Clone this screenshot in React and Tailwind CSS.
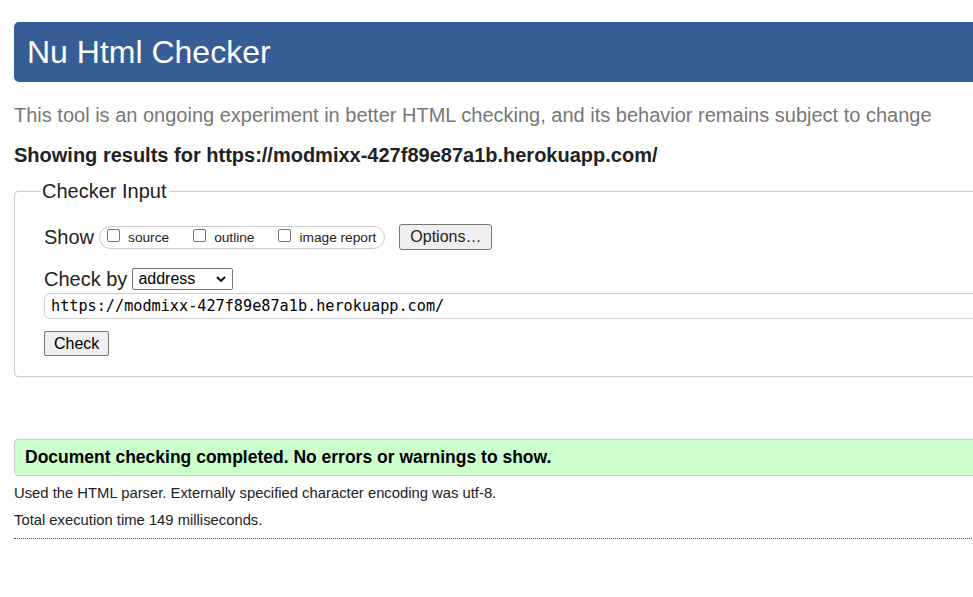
import React from "react";

function Box({ label }) {
  return (
    <span className="flex items-baseline">
      <span className="inline-block w-[13px] h-[13px] mb-[3px] border border-[#767676] rounded-[2px] bg-white" />
      <span className="ml-[8px] text-[13.7px] leading-[16px]">{label}</span>
    </span>
  );
}

export default function App() {
  const url = "https://modmixx-427f89e87a1b.herokuapp.com/";

  return (
    <div className="w-full min-h-[597px] overflow-hidden bg-white text-[#222] font-['Liberation_Sans',Arial,sans-serif]">
      <div className="w-[1200px] pl-[14px] pt-[22px]">
        {/* header */}
        <header className="h-[60px] flex items-center pl-[13px] bg-[#365d95] rounded-[5px]">
          <h1 className="text-[32px] leading-none text-white">Nu Html Checker</h1>
        </header>

        <p className="mt-[21px] text-[20px] leading-[24px] text-[#777]">
          This tool is an ongoing experiment in better HTML checking, and its behavior remains subject to change
        </p>
        <p className="mt-[16px] text-[20px] leading-[24px] font-bold">
          Showing results for {url}
        </p>

        {/* checker input */}
        <fieldset className="mt-[12px] border border-[#ccc] rounded-[4px] pl-[25px] pt-[21px] pb-[20px]">
          <legend className="px-[2px] text-[20px] leading-[24px]">Checker Input</legend>
          <div className="pl-[4px] flex flex-col items-start">
            <div className="h-[26px] flex items-center">
              <span className="text-[20px] leading-[26px]">Show</span>
              <div className="ml-[5px] h-[23px] flex items-center gap-[24px] pl-[7px] pr-[8px] border border-[#ccc] rounded-full">
                <Box label="source" />
                <Box label="outline" />
                <Box label="image report" />
              </div>
              <button className="ml-[14px] h-[26px] px-[10px] text-[16px] bg-[#efefef] border border-[#767676] rounded-[3px]">
                Options…
              </button>
            </div>

            <div className="mt-[17px] h-[24px] flex items-center">
              <span className="text-[20px] leading-[24px]">Check by</span>
              <div className="ml-[5px] w-[101px] h-[22px] flex items-center justify-between pl-[5px] pr-[6px] border border-[#767676] rounded-[2px] text-[16px] text-black">
                <span>address</span>
                <svg width="10" height="6" viewBox="0 0 10 6" fill="none" stroke="#000" strokeWidth="1.8">
                  <path d="M1 1l4 4 4-4" />
                </svg>
              </div>
            </div>

            <input
              readOnly
              value={url}
              className="mt-[2px] w-full h-[26px] pl-[6px] border border-[#ccc] rounded-[6px] text-[15.2px] text-black font-['DejaVu_Sans_Mono',monospace] outline-none"
            />

            <button className="mt-[12px] h-[25px] px-[9px] text-[16px] text-black bg-[#efefef] border border-[#767676] rounded-[2px]">
              Check
            </button>
          </div>
        </fieldset>

        {/* results */}
        <div className="mt-[62px] h-[37px] flex items-center pl-[10px] bg-[#ccffcc] border border-[#ccc] rounded-[4px]">
          <p className="text-[17.5px] font-bold text-black">
            Document checking completed. No errors or warnings to show.
          </p>
        </div>
        <p className="mt-[8px] text-[14.8px] leading-[18px]">
          Used the HTML parser. Externally specified character encoding was utf-8.
        </p>
        <p className="mt-[9px] text-[14.8px] leading-[18px]">Total execution time 149 milliseconds.</p>
        <div className="mt-[9px] border-t border-dotted border-[#555]" />
      </div>
    </div>
  );
}
